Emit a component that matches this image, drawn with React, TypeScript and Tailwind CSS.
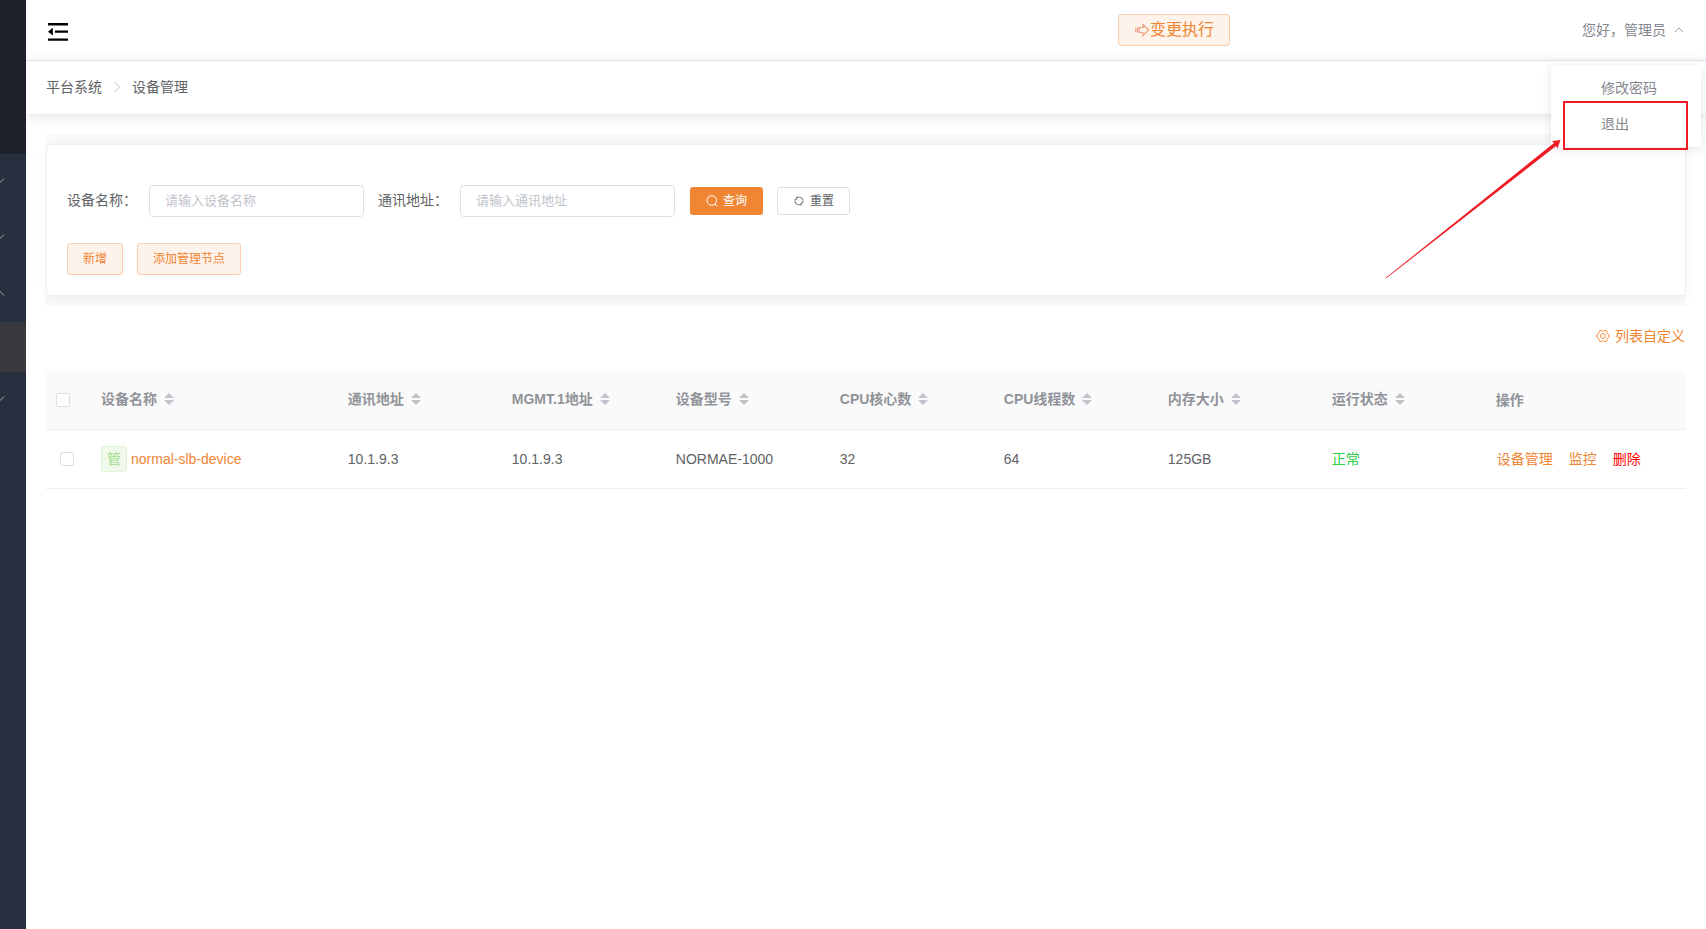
import type { ReactNode } from "react";

const columns = [
  "设备名称",
  "通讯地址",
  "MGMT.1地址",
  "设备型号",
  "CPU核心数",
  "CPU线程数",
  "内存大小",
  "运行状态",
];

const row = ["10.1.9.3", "10.1.9.3", "NORMAE-1000", "32", "64", "125GB"];

function Chevron({ d, className }: { d: string; className: string }) {
  return (
    <svg viewBox="0 0 12 12" className={className} fill="none" stroke="currentColor" strokeWidth="1" aria-hidden="true">
      <path d={d} />
    </svg>
  );
}

const DOWN = "M1 3.5 6 8.5 11 3.5";
const UP = "M1 8.5 6 3.5 11 8.5";
const RIGHT = "M3.5 1 8.5 6 3.5 11";

function SideItem({ d }: { d: string }) {
  return (
    <a href="#" aria-label="菜单" className="flex h-14 items-center pb-0.5 text-[#a3a7ac]">
      <Chevron d={d} className="-ml-[7px] size-3 shrink-0" />
    </a>
  );
}

function Sidebar() {
  return (
    <nav className="w-[26px] shrink-0 overflow-hidden bg-[#27303e]">
      <div className="h-[154px] bg-[#1d222c]" />
      <SideItem d={DOWN} />
      <SideItem d={DOWN} />
      <SideItem d={UP} />
      <a href="#" aria-label="设备管理" className="block h-[50px] bg-[#39383c]" />
      <SideItem d={DOWN} />
    </nav>
  );
}

function Field({ id, label, placeholder }: { id: string; label: string; placeholder: string }) {
  return (
    <div className="flex items-center">
      <label htmlFor={id} className="w-[82px] pb-0.5 text-sm">
        {label}
      </label>
      <input
        id={id}
        type="text"
        placeholder={placeholder}
        className="h-8 w-[215px] rounded border border-[#dcdfe6] bg-white px-[15px] pb-0.5 text-[13px] outline-none placeholder:text-[#c0c4cc]"
      />
    </div>
  );
}

function LightButton({ children }: { children: ReactNode }) {
  return (
    <button type="button" className="h-8 rounded-[3px] border border-[#f9ceae] bg-[#fef3eb] px-[15px] text-xs text-[#f08533]">
      {children}
    </button>
  );
}

function Check({ label }: { label: string }) {
  return (
    <input
      type="checkbox"
      aria-label={label}
      className="block size-3.5 appearance-none rounded-[2px] border border-[#dcdfe6] bg-white"
    />
  );
}

function SortIcon() {
  return (
    <svg viewBox="0 0 10 12" className="h-3 w-2.5" fill="#c0c4cc" aria-hidden="true">
      <path d="M0 5 5 0 10 5zM0 7H10L5 12z" />
    </svg>
  );
}

function TopBar() {
  return (
    <header className="relative flex h-[61px] items-center border-b border-[#e3e3e5] px-[22px]">
      <button type="button" aria-label="收起菜单" className="mt-1">
        <svg viewBox="0 0 20 18" className="block h-[18px] w-5" fill="#000" aria-hidden="true">
          <path d="M0 0H20V2.4H0zM7 7.4H20V9.8H7zM0 15.4H20V17.8H0zM0 8.7 4.8 4.8V12.6z" />
        </svg>
      </button>
      <button
        type="button"
        className="mr-[352px] ml-auto flex h-8 items-center rounded-[3px] border border-[#f9ceae] bg-[#fef3eb] px-[15px] text-base text-[#f08533]"
      >
        <svg viewBox="0 0 16 16" className="size-4" fill="none" stroke="#f2a184" strokeWidth="1.2" aria-hidden="true">
          <path d="M1.8 5.500V10.500M3.600 5.500V10.500" strokeWidth="1.300" />
          <path d="M5.200 5.500H9V2.500L14.600 8 9 13.500V10.500H5.200z" />
        </svg>
        变更执行
      </button>
      <button type="button" className="flex items-center text-sm text-[#84878e]">
        您好，管理员
        <Chevron d={UP} className="ml-2 size-2.5" />
      </button>
      <UserMenu />
    </header>
  );
}

function UserMenu() {
  return (
    <>
      <div className="absolute top-[65px] right-[5px] z-10 flex w-[150px] flex-col rounded-[2px] bg-white py-[5px] pl-[50px] text-sm leading-9 text-[#84878e] shadow-[0_2px_12px_rgba(0,0,0,0.1)]">
        <a href="#">修改密码</a>
        <a href="#">退出</a>
      </div>
      <svg viewBox="0 0 306 182" className="pointer-events-none absolute top-[100px] right-[16px] z-20 h-[182px] w-[306px]" aria-hidden="true">
        <rect x="180" y="2" width="123" height="47" fill="none" stroke="#ee1c25" strokeWidth="2" />
        <path d="M1.500 178 170 43 168 41 176.500 40 173.500 48.500 172 46 2 178.500z" fill="#ee1c25" />
      </svg>
    </>
  );
}

function DeviceTable() {
  return (
    <table className="w-full table-fixed border-separate border-spacing-0 text-left text-sm">
      <colgroup>
        <col className="w-[45px]" />
        <col className="w-[15.05%]" />
        <col className="w-[10%]" />
        <col className="w-[10%]" />
        <col className="w-[10%]" />
        <col className="w-[10%]" />
        <col className="w-[10%]" />
        <col className="w-[10%]" />
        <col className="w-[10%]" />
        <col />
      </colgroup>
      <thead>
        <tr className="h-[59px] bg-[#fafafa] text-[#909399]">
          <th className="border-b border-[#ebeef5] pl-2.5">
            <Check label="全选" />
          </th>
          {columns.map((name) => (
            <th key={name} className="border-b border-[#ebeef5] px-2.5 pb-0.5 font-bold">
              <button type="button" className="flex items-center gap-[7px] font-bold whitespace-nowrap">
                {name}
                <SortIcon />
              </button>
            </th>
          ))}
          <th className="border-b border-[#ebeef5] px-2.5 font-bold">操作</th>
        </tr>
      </thead>
      <tbody>
        <tr className="h-[59px]">
          <td className="border-b border-[#ebeef5] pl-3.5">
            <Check label="选择 normal-slb-device" />
          </td>
          <td className="border-b border-[#ebeef5] px-2.5">
            <div className="flex items-center gap-1 whitespace-nowrap">
              <span className="flex size-[26px] items-center justify-center rounded-[3px] border border-[#e1f3d8] bg-[#f0f9eb] text-[#9fdb86]">
                管
              </span>
              <a href="#" className="text-[#f08533]">
                normal-slb-device
              </a>
            </div>
          </td>
          {row.map((value, i) => (
            <td key={i} className="border-b border-[#ebeef5] px-2.5">
              {value}
            </td>
          ))}
          <td className="border-b border-[#ebeef5] px-2.5 text-[#2fd048]">正常</td>
          <td className="border-b border-[#ebeef5] px-[11px]">
            <div className="flex gap-4 whitespace-nowrap text-[#f08533]">
              <a href="#">设备管理</a>
              <a href="#">监控</a>
              <a href="#" className="text-[#ff0000]">
                删除
              </a>
            </div>
          </td>
        </tr>
      </tbody>
    </table>
  );
}

export default function App() {
  return (
    <div className="flex min-h-screen bg-white font-['Liberation_Sans','Noto_Sans_CJK_SC',sans-serif] text-[#606266]">
      <Sidebar />
      <div className="flex min-w-0 flex-1 flex-col">
        <TopBar />
        <nav aria-label="面包屑" className="flex h-[53px] items-center px-5 pb-0.5 text-sm shadow-[0_2px_12px_rgba(0,0,0,0.12)]">
          <a href="#">平台系统</a>
          <Chevron d={RIGHT} className="mx-[9px] size-3 text-[#c0c4cc]" />
          <span>设备管理</span>
        </nav>
        <main className="px-5 pt-5">
          <section className="bg-[#f8f9fb] py-2.5">
            <form className="rounded border border-[#ebeef5] bg-white px-5 pt-10 pb-5 shadow-[0_2px_12px_rgba(0,0,0,0.05)]">
              <div className="flex items-center gap-3.5">
                <Field id="device-name" label="设备名称：" placeholder="请输入设备名称" />
                <Field id="device-address" label="通讯地址：" placeholder="请输入通讯地址" />
                <button type="button" className="ml-px flex h-7 items-center gap-[5px] rounded-[3px] bg-[#f08533] px-4 text-xs text-white">
                  <svg viewBox="0 0 12 12" className="size-3" fill="none" stroke="currentColor" strokeWidth="1" aria-hidden="true">
                    <circle cx="5.800" cy="5.500" r="4.800" />
                    <path d="M9 9 11.300 11.300" />
                  </svg>
                  查询
                </button>
                <button type="button" className="flex h-7 items-center gap-[5px] rounded-[3px] border border-[#dcdfe6] bg-white px-[15px] text-xs">
                  <svg viewBox="0 0 12 12" className="size-3" fill="none" stroke="currentColor" strokeWidth="0.900" aria-hidden="true">
                    <path d="M4 2.300H6.500Q10 2.300 10 5.500V6.800M3.800 1.500V4.300H1.500M8 9.700H5.500Q2 9.700 2 6.500V5.200M8.200 10.500V7.700H10.500" />
                  </svg>
                  重置
                </button>
              </div>
              <div className="mt-[26px] flex gap-3.5">
                <LightButton>新增</LightButton>
                <LightButton>添加管理节点</LightButton>
              </div>
            </form>
          </section>
          <div className="flex h-[65px] items-center justify-end pb-1.5">
            <button type="button" className="flex items-center gap-[5px] pr-px text-sm text-[#f08533]">
              <svg viewBox="0 0 14 14" className="size-3.5" fill="none" stroke="currentColor" strokeWidth="0.900" aria-hidden="true">
                <path d="M5 1.200 6 2H8L9 1.200 11 2.300V3.700L12 5.300 13.100 6V8L12 8.700 11 10.300V11.700L9 12.800 8 12H6L5 12.800 3 11.700V10.300L2 8.700.9 8V6L2 5.300 3 3.700V2.300z" />
                <circle cx="7" cy="7" r="2.500" />
              </svg>
              列表自定义
            </button>
          </div>
          <DeviceTable />
        </main>
      </div>
    </div>
  );
}
